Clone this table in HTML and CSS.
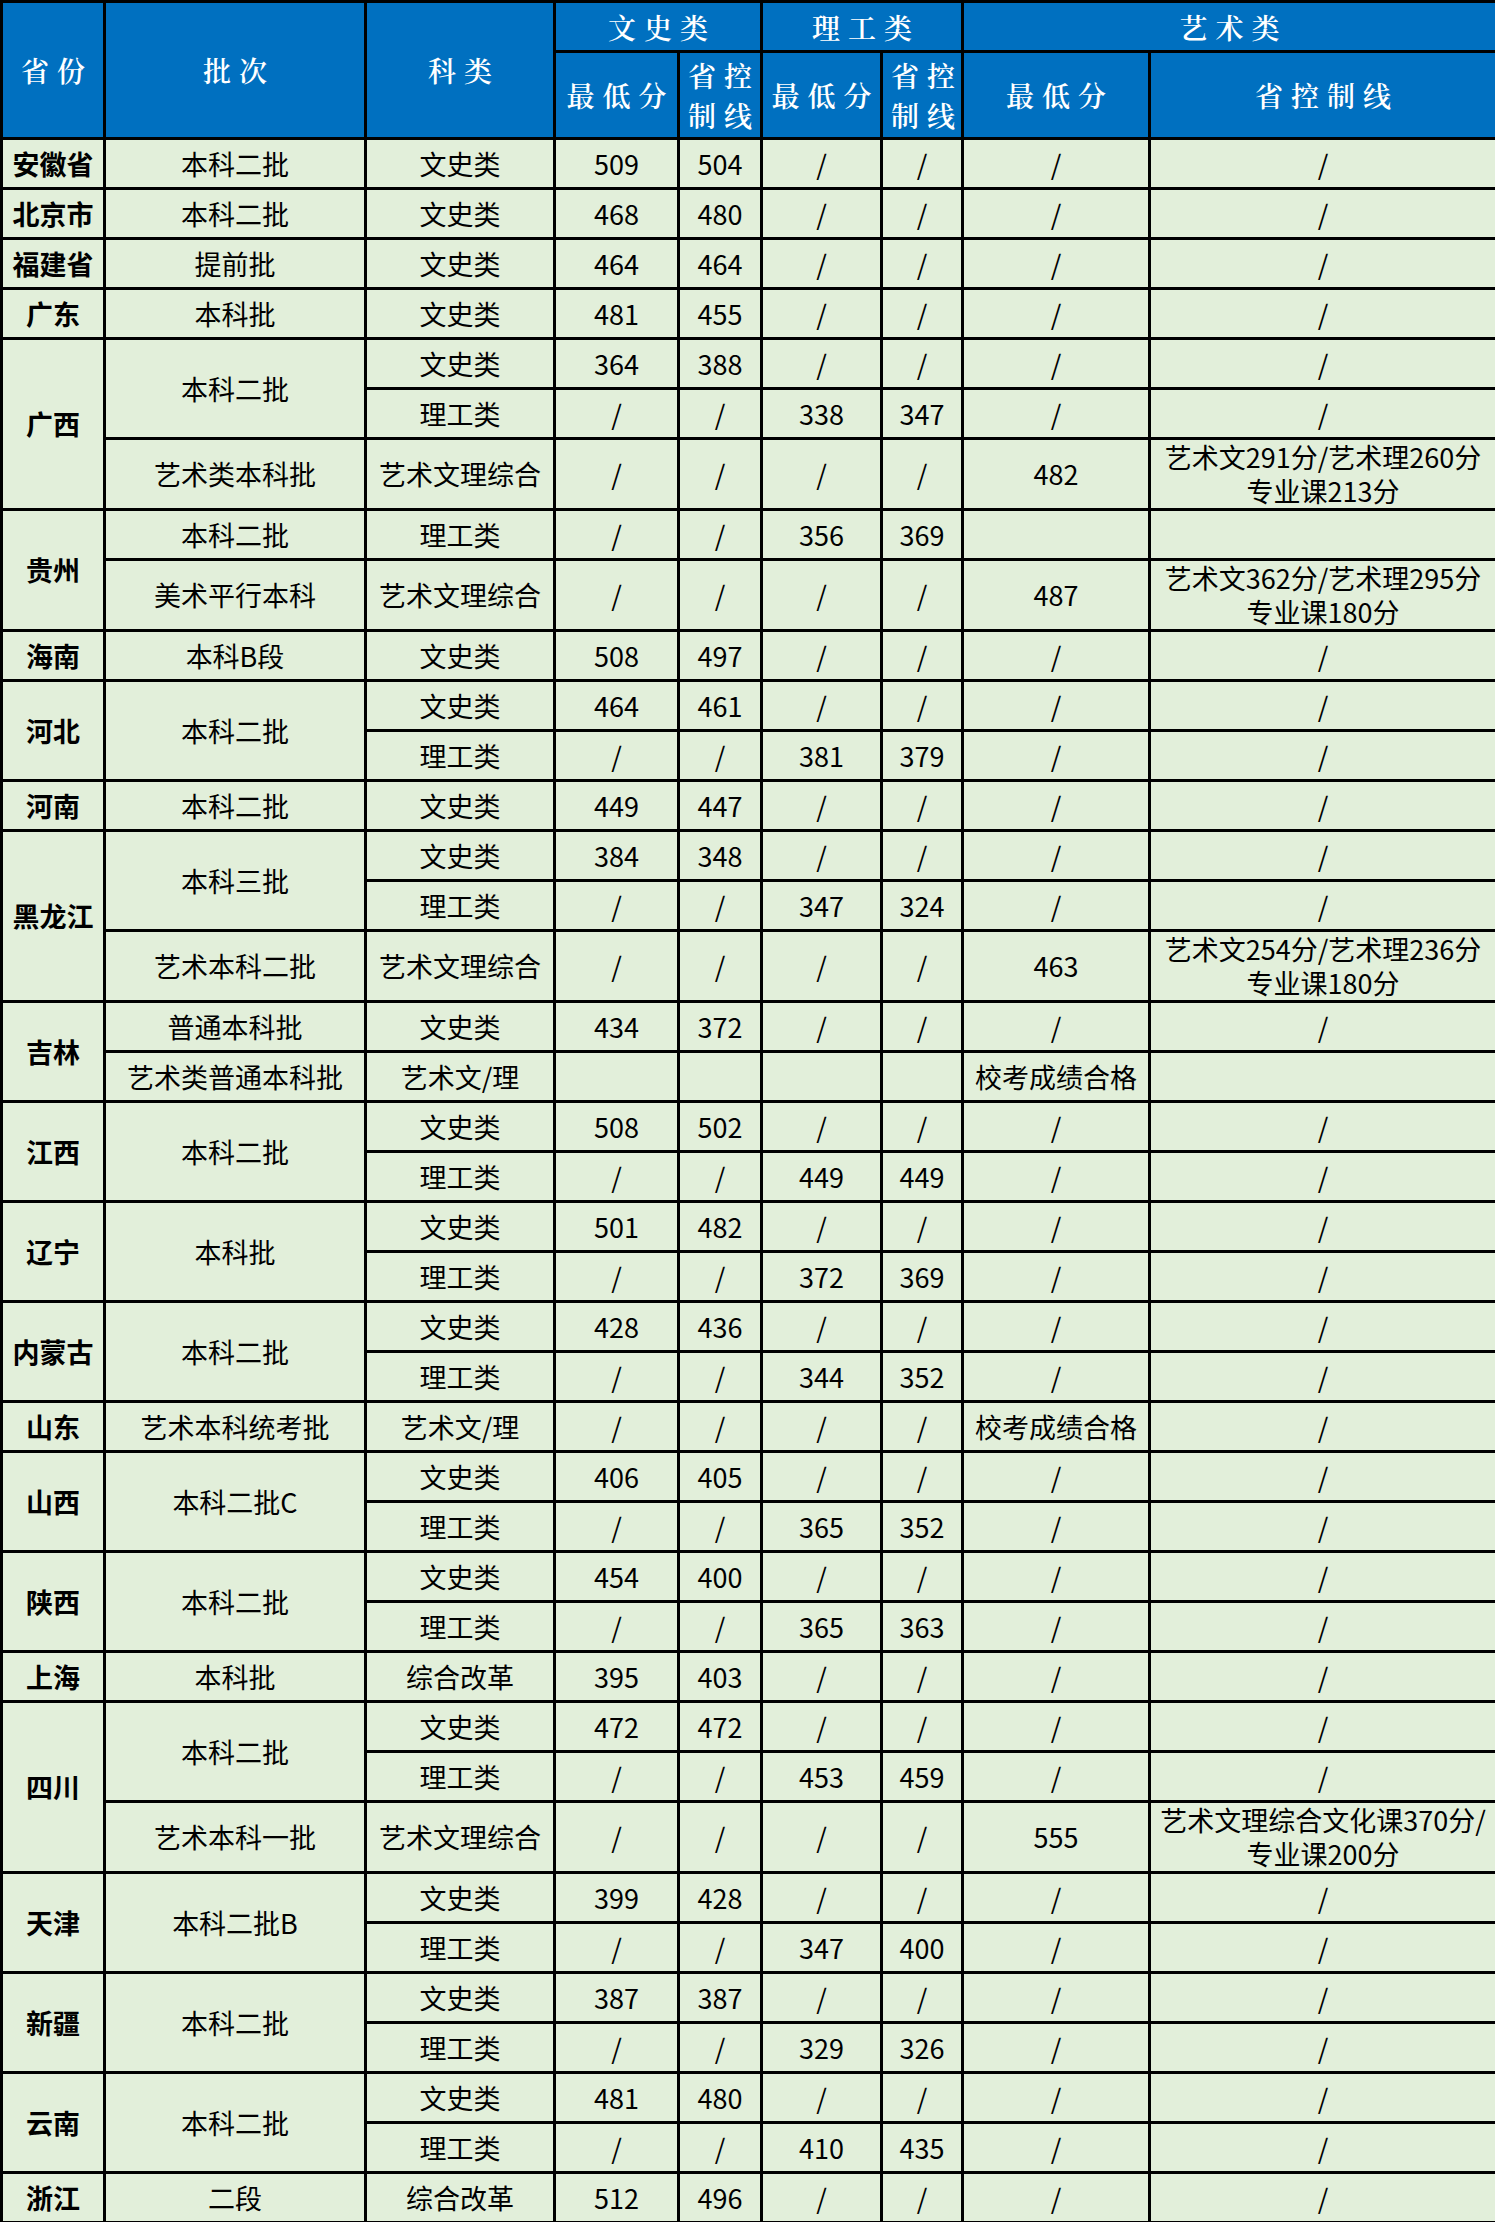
FILE: index.html
```html
<!DOCTYPE html>
<html lang="zh-CN">
<head>
<meta charset="utf-8">
<title>录取分数</title>
<link rel="stylesheet" href="styles.css">
</head>
<body>
<table class="score-table">
  <colgroup>
    <col class="c-prov"><col class="c-batch"><col class="c-type">
    <col class="c-w1"><col class="c-w2"><col class="c-l1"><col class="c-l2">
    <col class="c-a1"><col class="c-a2">
  </colgroup>
  <thead>
    <tr class="h1">
      <th rowspan="2">省份</th><th rowspan="2">批次</th><th rowspan="2">科类</th>
      <th colspan="2">文史类</th><th colspan="2">理工类</th><th colspan="2">艺术类</th>
    </tr>
    <tr class="h2">
      <th>最低分</th><th>省控<br>制线</th><th>最低分</th><th>省控<br>制线</th><th>最低分</th><th>省控制线</th>
    </tr>
  </thead>
  <tbody>
    <tr><td class="prov">安徽省</td><td>本科二批</td><td>文史类</td><td>509</td><td>504</td><td>/</td><td>/</td><td>/</td><td>/</td></tr>
    <tr><td class="prov">北京市</td><td>本科二批</td><td>文史类</td><td>468</td><td>480</td><td>/</td><td>/</td><td>/</td><td>/</td></tr>
    <tr><td class="prov">福建省</td><td>提前批</td><td>文史类</td><td>464</td><td>464</td><td>/</td><td>/</td><td>/</td><td>/</td></tr>
    <tr><td class="prov">广东</td><td>本科批</td><td>文史类</td><td>481</td><td>455</td><td>/</td><td>/</td><td>/</td><td>/</td></tr>
    <tr><td class="prov" rowspan="3">广西</td><td rowspan="2">本科二批</td><td>文史类</td><td>364</td><td>388</td><td>/</td><td>/</td><td>/</td><td>/</td></tr>
    <tr><td>理工类</td><td>/</td><td>/</td><td>338</td><td>347</td><td>/</td><td>/</td></tr>
    <tr class="tall"><td>艺术类本科批</td><td>艺术文理综合</td><td>/</td><td>/</td><td>/</td><td>/</td><td>482</td><td class="multi">艺术文291分/艺术理260分<br>专业课213分</td></tr>
    <tr><td class="prov" rowspan="2">贵州</td><td>本科二批</td><td>理工类</td><td>/</td><td>/</td><td>356</td><td>369</td><td></td><td></td></tr>
    <tr class="tall"><td>美术平行本科</td><td>艺术文理综合</td><td>/</td><td>/</td><td>/</td><td>/</td><td>487</td><td class="multi">艺术文362分/艺术理295分<br>专业课180分</td></tr>
    <tr><td class="prov">海南</td><td>本科B段</td><td>文史类</td><td>508</td><td>497</td><td>/</td><td>/</td><td>/</td><td>/</td></tr>
    <tr><td class="prov" rowspan="2">河北</td><td rowspan="2">本科二批</td><td>文史类</td><td>464</td><td>461</td><td>/</td><td>/</td><td>/</td><td>/</td></tr>
    <tr><td>理工类</td><td>/</td><td>/</td><td>381</td><td>379</td><td>/</td><td>/</td></tr>
    <tr><td class="prov">河南</td><td>本科二批</td><td>文史类</td><td>449</td><td>447</td><td>/</td><td>/</td><td>/</td><td>/</td></tr>
    <tr><td class="prov" rowspan="3">黑龙江</td><td rowspan="2">本科三批</td><td>文史类</td><td>384</td><td>348</td><td>/</td><td>/</td><td>/</td><td>/</td></tr>
    <tr><td>理工类</td><td>/</td><td>/</td><td>347</td><td>324</td><td>/</td><td>/</td></tr>
    <tr class="tall"><td>艺术本科二批</td><td>艺术文理综合</td><td>/</td><td>/</td><td>/</td><td>/</td><td>463</td><td class="multi">艺术文254分/艺术理236分<br>专业课180分</td></tr>
    <tr><td class="prov" rowspan="2">吉林</td><td>普通本科批</td><td>文史类</td><td>434</td><td>372</td><td>/</td><td>/</td><td>/</td><td>/</td></tr>
    <tr><td>艺术类普通本科批</td><td>艺术文/理</td><td></td><td></td><td></td><td></td><td>校考成绩合格</td><td></td></tr>
    <tr><td class="prov" rowspan="2">江西</td><td rowspan="2">本科二批</td><td>文史类</td><td>508</td><td>502</td><td>/</td><td>/</td><td>/</td><td>/</td></tr>
    <tr><td>理工类</td><td>/</td><td>/</td><td>449</td><td>449</td><td>/</td><td>/</td></tr>
    <tr><td class="prov" rowspan="2">辽宁</td><td rowspan="2">本科批</td><td>文史类</td><td>501</td><td>482</td><td>/</td><td>/</td><td>/</td><td>/</td></tr>
    <tr><td>理工类</td><td>/</td><td>/</td><td>372</td><td>369</td><td>/</td><td>/</td></tr>
    <tr><td class="prov" rowspan="2">内蒙古</td><td rowspan="2">本科二批</td><td>文史类</td><td>428</td><td>436</td><td>/</td><td>/</td><td>/</td><td>/</td></tr>
    <tr><td>理工类</td><td>/</td><td>/</td><td>344</td><td>352</td><td>/</td><td>/</td></tr>
    <tr><td class="prov">山东</td><td>艺术本科统考批</td><td>艺术文/理</td><td>/</td><td>/</td><td>/</td><td>/</td><td>校考成绩合格</td><td>/</td></tr>
    <tr><td class="prov" rowspan="2">山西</td><td rowspan="2">本科二批C</td><td>文史类</td><td>406</td><td>405</td><td>/</td><td>/</td><td>/</td><td>/</td></tr>
    <tr><td>理工类</td><td>/</td><td>/</td><td>365</td><td>352</td><td>/</td><td>/</td></tr>
    <tr><td class="prov" rowspan="2">陕西</td><td rowspan="2">本科二批</td><td>文史类</td><td>454</td><td>400</td><td>/</td><td>/</td><td>/</td><td>/</td></tr>
    <tr><td>理工类</td><td>/</td><td>/</td><td>365</td><td>363</td><td>/</td><td>/</td></tr>
    <tr><td class="prov">上海</td><td>本科批</td><td>综合改革</td><td>395</td><td>403</td><td>/</td><td>/</td><td>/</td><td>/</td></tr>
    <tr><td class="prov" rowspan="3">四川</td><td rowspan="2">本科二批</td><td>文史类</td><td>472</td><td>472</td><td>/</td><td>/</td><td>/</td><td>/</td></tr>
    <tr><td>理工类</td><td>/</td><td>/</td><td>453</td><td>459</td><td>/</td><td>/</td></tr>
    <tr class="tall"><td>艺术本科一批</td><td>艺术文理综合</td><td>/</td><td>/</td><td>/</td><td>/</td><td>555</td><td class="multi">艺术文理综合文化课370分/<br>专业课200分</td></tr>
    <tr><td class="prov" rowspan="2">天津</td><td rowspan="2">本科二批B</td><td>文史类</td><td>399</td><td>428</td><td>/</td><td>/</td><td>/</td><td>/</td></tr>
    <tr><td>理工类</td><td>/</td><td>/</td><td>347</td><td>400</td><td>/</td><td>/</td></tr>
    <tr><td class="prov" rowspan="2">新疆</td><td rowspan="2">本科二批</td><td>文史类</td><td>387</td><td>387</td><td>/</td><td>/</td><td>/</td><td>/</td></tr>
    <tr><td>理工类</td><td>/</td><td>/</td><td>329</td><td>326</td><td>/</td><td>/</td></tr>
    <tr><td class="prov" rowspan="2">云南</td><td rowspan="2">本科二批</td><td>文史类</td><td>481</td><td>480</td><td>/</td><td>/</td><td>/</td><td>/</td></tr>
    <tr><td>理工类</td><td>/</td><td>/</td><td>410</td><td>435</td><td>/</td><td>/</td></tr>
    <tr><td class="prov">浙江</td><td>二段</td><td>综合改革</td><td>512</td><td>496</td><td>/</td><td>/</td><td>/</td><td>/</td></tr>
  </tbody>
</table>
</body>
</html>
```

FILE: styles.css
```css
html, body {
  margin: 0;
  padding: 0;
  background: #ffffff;
}

.score-table {
  width: 1495px;
  table-layout: fixed;
  border-collapse: collapse;
  font-family: "Noto Sans CJK SC", "Noto Sans", sans-serif;
  font-size: 27px;
  color: #000;
}

.c-prov { width: 103px; }
.c-batch { width: 261px; }
.c-type { width: 189px; }
.c-w1 { width: 124px; }
.c-w2 { width: 83px; }
.c-l1 { width: 120px; }
.c-l2 { width: 81px; }
.c-a1 { width: 187px; }
.c-a2 { width: 347px; }

.score-table th,
.score-table td {
  border: 3px solid #000;
  padding: 0;
  text-align: center;
  vertical-align: middle;
  overflow: hidden;
  white-space: nowrap;
}

.score-table th {
  background: #0070c0;
  color: #ffffff;
  font-family: "Noto Serif CJK SC", "Noto Sans CJK SC", serif;
  font-weight: 600;
  font-size: 28px;
  letter-spacing: 8px;
  padding-left: 8px;
  line-height: 40px;
}

.h1 th { height: 47px; }
.h2 th { height: 84px; }

.score-table td {
  background: #e2efda;
  line-height: 34px;
  height: 47px;
}

.score-table tr.tall td {
  height: 68px;
}

.score-table td.prov {
  font-weight: 700;
}

.score-table td.multi {
  line-height: 34px;
}
```
